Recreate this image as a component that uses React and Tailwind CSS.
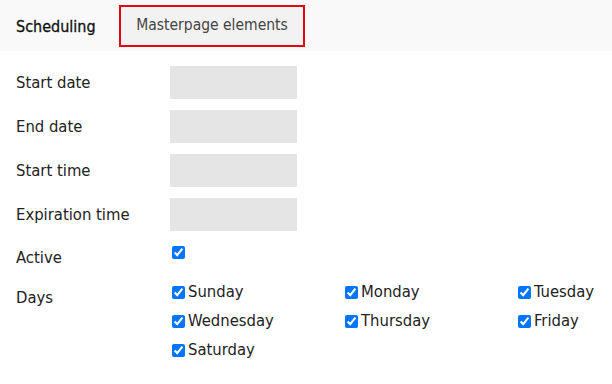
import React from 'react';

const fields = ['Start date', 'End date', 'Start time', 'Expiration time'];
const days = ['Sunday', 'Monday', 'Tuesday', 'Wednesday', 'Thursday', 'Friday', 'Saturday'];

const Check = () => (
  <input type="checkbox" checked readOnly className="m-0 h-[13px] w-[13px] shrink-0 accent-[#0075ff]" />
);

export default function App() {
  return (
    <div className="h-[384px] w-[612px] bg-white text-[16.5px] text-[#222]" style={{ fontFamily: '"DejaVu Sans Condensed", "DejaVu Sans", sans-serif' }}>
      {/* Tabs */}
      <div className="flex h-[51px] items-end bg-[#f9f9f9]">
        <div className="flex h-[49px] w-[118px] items-center pl-4 text-[16px] text-[#111] [-webkit-text-stroke:0.3px_#111]">Scheduling</div>
        <div className="mb-[4px] ml-[1px] flex h-[42px] w-[186px] items-center justify-center border-2 border-[#e30613] bg-[#f2f2f2] text-[15.5px] text-[#444]">
          Masterpage elements
        </div>
      </div>

      {/* Form */}
      <div className="px-4 pt-[15px]">
        {fields.map((f) => (
          <div key={f} className="flex h-[44px] items-start">
            <div className="w-[154px] pt-[5px]">{f}</div>
            <div className="h-[33px] w-[127px] bg-[#e5e5e5]" />
          </div>
        ))}
        <div className="flex h-[40px] items-start">
          <div className="w-[154px] pt-[4px]">Active</div>
          <div className="pl-[2px] pt-[0px]">
            <Check />
          </div>
        </div>
        <div className="flex items-start">
          <div className="w-[154px] pt-[4px]">Days</div>
          <div className="grid grid-cols-[173px_173px_auto] gap-y-[8px] pl-[2px]">
            {days.map((d) => (
              <label key={d} className="flex h-[21px] items-center gap-[3px]">
                <Check />
                <span>{d}</span>
              </label>
            ))}
          </div>
        </div>
      </div>
    </div>
  );
}
